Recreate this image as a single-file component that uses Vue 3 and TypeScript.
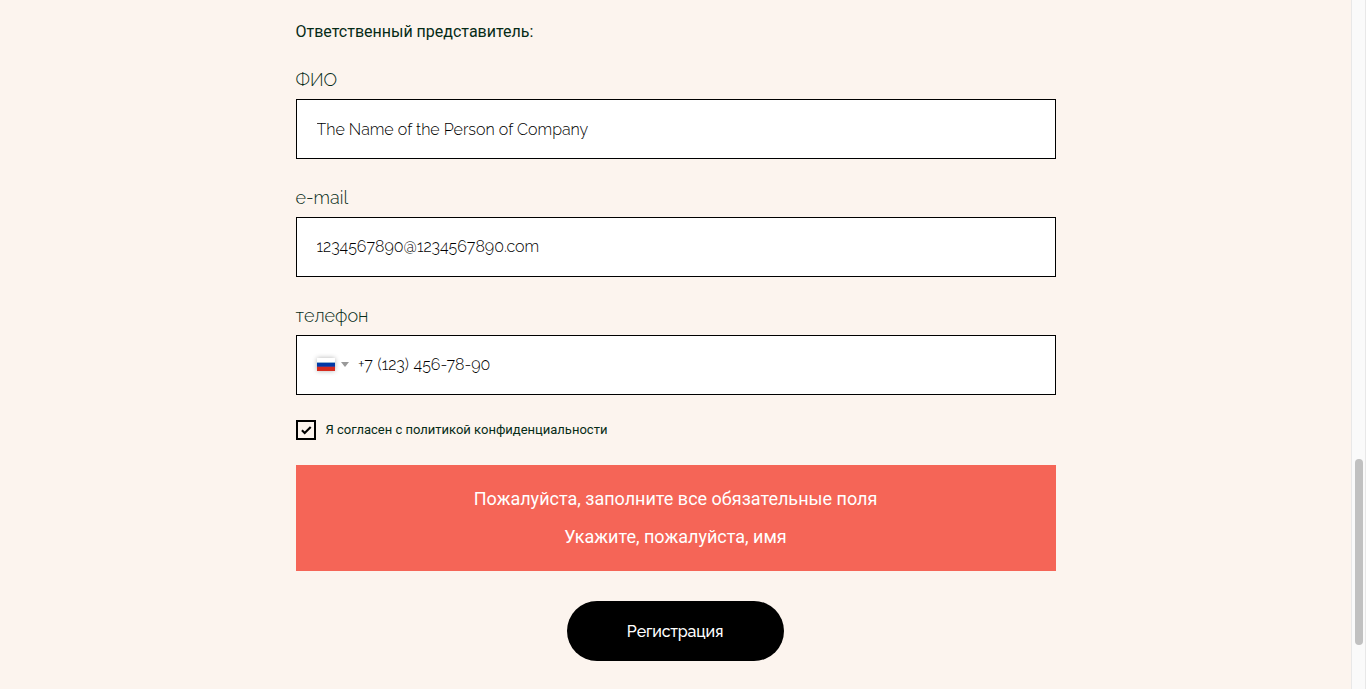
<script setup lang="ts">
import { ref } from 'vue'

const fullName = ref('The Name of the Person of Company')
const email = ref('1234567890@1234567890.com')
const phone = ref('+7 (123) 456-78-90')
const agreed = ref(true)
const errors: string[] = [
  'Пожалуйста, заполните все обязательные поля',
  'Укажите, пожалуйста, имя',
]
</script>

<template>
  <div class="page">
    <form class="form" @submit.prevent>
      <h2 class="heading">Ответственный представитель:</h2>

      <div class="field">
        <label class="label" for="name">ФИО</label>
        <div class="box"><input id="name" v-model="fullName" class="input" type="text" /></div>
      </div>
      <div class="field">
        <label class="label" for="mail">e-mail</label>
        <div class="box box-raised"><input id="mail" v-model="email" class="input" type="text" /></div>
      </div>
      <div class="field">
        <label class="label" for="phone">телефон</label>
        <div class="box box-raised">
          <span class="flag"></span>
          <span class="arrow"></span>
          <input id="phone" v-model="phone" class="input input-phone" type="text" />
        </div>
      </div>

      <label class="agree">
        <input v-model="agreed" class="native" type="checkbox" />
        <span class="check">
          <svg v-if="agreed" width="16" height="16" viewBox="0 0 16 16">
            <path d="M3.9 8.3 6.7 11 12.7 5" fill="none" stroke="#000" stroke-width="2.1" />
          </svg>
        </span>
        <span class="agree-text">Я согласен с политикой конфиденциальности</span>
      </label>

      <div class="errors">
        <p v-for="message in errors" :key="message" class="error">{{ message }}</p>
      </div>

      <button class="submit" type="submit">Регистрация</button>
    </form>
    <div class="scroll"><div class="thumb"></div></div>
  </div>
</template>

<style>
html,
body {
  margin: 0;
  overflow: hidden;
}
</style>

<style scoped>
.page {
  display: flex;
  box-sizing: border-box;
  height: 689px;
  background: #fcf4ee;
  color: #062b16;
  font-family: Roboto, "Noto Sans", sans-serif;
}
.form {
  display: flex;
  flex-direction: column;
  width: 760px;
  margin: 0 295.5px 0 295.5px;
  padding-top: 19px;
}
.heading {
  margin: 0 0 25px;
  height: 25px;
  font-size: 16px;
  font-weight: 400;
  line-height: 25px;
  white-space: nowrap;
}
.field {
  height: 118px;
}
.label {
  display: block;
  height: 30px;
  font: 300 18px/21px Raleway, Lato, sans-serif;
}
.box {
  display: flex;
  align-items: center;
  box-sizing: border-box;
  height: 60px;
  padding: 0 20px;
  border: 1px solid #000;
  background: #fff;
}
.box-raised {
  padding-bottom: 2px;
}
.input {
  flex: 1;
  min-width: 0;
  height: 56px;
  padding: 0;
  border: 0;
  outline: 0;
  background: transparent;
  color: #000;
  font: 300 16px/24px Raleway, Lato, sans-serif;
  font-variant-numeric: oldstyle-nums;
}
.input-phone {
  word-spacing: 0.6px;
}
.flag {
  width: 18px;
  height: 13px;
  background: linear-gradient(#fff 0 4px, #8fb3d4 4px 5px, #0039a6 5px 8px, #48398a 8px 9px, #d52b1e 9px);
  box-shadow: 0 0 5px rgba(0, 0, 0, 0.3);
}
.arrow {
  margin: 0 9.6px 0 6px;
  border: 4px solid transparent;
  border-top: 5px solid #999;
  border-bottom: 0;
}
.agree {
  display: flex;
  align-items: center;
  height: 20px;
  margin-top: -3px;
}
.native {
  position: absolute;
  opacity: 0;
}
.check {
  box-sizing: border-box;
  width: 20px;
  height: 20px;
  margin-right: 10px;
  border: 2px solid #000;
}
.check svg {
  display: block;
}
.agree-text {
  font-size: 13px;
  line-height: 20px;
  white-space: nowrap;
}
.errors {
  box-sizing: border-box;
  height: 106px;
  margin-top: 25px;
  padding: 20px;
  background: #f56557;
  color: #fff;
  text-align: center;
}
.error {
  margin: 0 0 10px;
  font-size: 18px;
  line-height: 28px;
}
.submit {
  align-self: center;
  width: 217px;
  height: 60px;
  margin: 30px 1px 0 0;
  padding: 2px 0 0;
  border: 0;
  border-radius: 30px;
  background: #000;
  color: #fff;
  font: 500 16px/24px Raleway, Lato, sans-serif;
  letter-spacing: -0.2px;
}
.scroll {
  box-sizing: border-box;
  width: 15px;
  padding: 459px 2px 0 3px;
  border: solid #e8e8e8;
  border-width: 0 1px;
  background: #fafafa;
}
.thumb {
  width: 8px;
  height: 186px;
  border-radius: 4px;
  background: #c1c1c1;
}
</style>
